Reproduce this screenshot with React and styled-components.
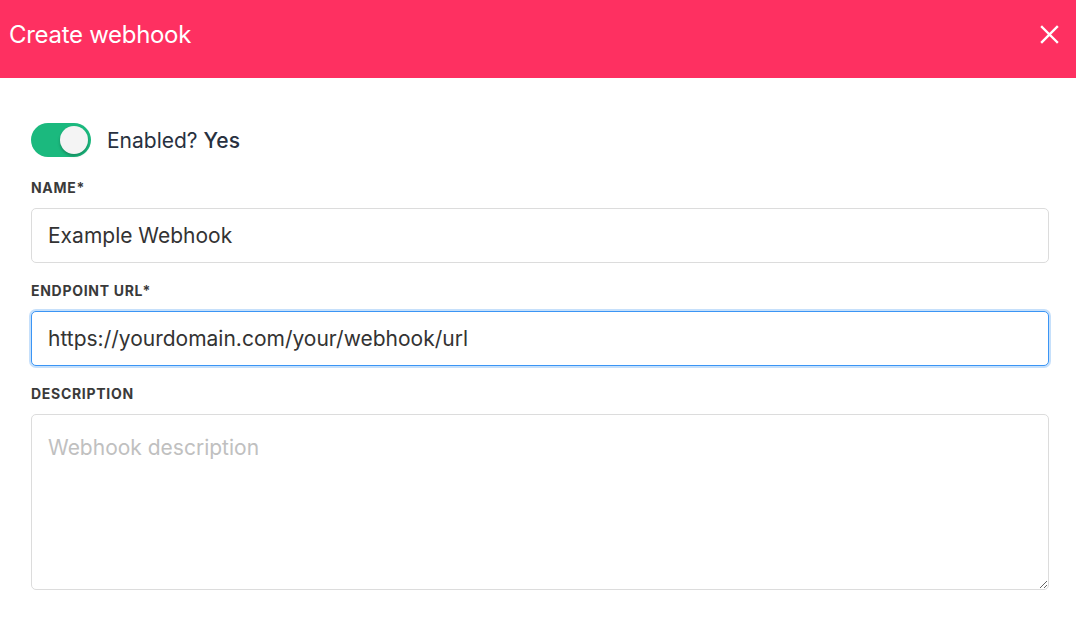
import React, { useEffect, useRef, useState } from "react";
import styled, { createGlobalStyle } from "styled-components";

const GlobalStyle = createGlobalStyle`
    *{ box-sizing: border-box; }
    body{
        margin: 0;
        background: #fff;
        font-family: Inter, "Liberation Sans", sans-serif;
    }
`;

export default function App(){
    const [enabled,setEnabled]=useState(true);
    const urlRef=useRef(null);

    useEffect(()=>{
        const el=urlRef.current;
        if(el){
            el.focus();
            el.setSelectionRange(el.value.length,el.value.length);
        }
    },[]);

    return (<Modal>
        <GlobalStyle/>
        <Header>
            <Title>Create webhook</Title>
            <Close aria-label="close">
                <svg width="19" height="19" viewBox="0 0 19 19">
                    <path d="M2 2L17 17M17 2L2 17" stroke="#fff" strokeWidth="2.4" strokeLinecap="square"/>
                </svg>
            </Close>
        </Header>
        <Body>
            <ToggleRow>
                <Toggle on={enabled} onClick={()=>setEnabled(!enabled)}><Knob on={enabled}/></Toggle>
                <ToggleText>Enabled? <b>{enabled ? "Yes" : "No"}</b></ToggleText>
            </ToggleRow>
            <Field first>
                <Label>Name*</Label>
                <Input defaultValue="Example Webhook"/>
            </Field>
            <Field>
                <Label>Endpoint URL*</Label>
                <Input ref={urlRef} defaultValue="https://yourdomain.com/your/webhook/url"/>
            </Field>
            <Field>
                <Label>Description</Label>
                <TextArea placeholder="Webhook description"/>
            </Field>
        </Body>
    </Modal>);
}

const Modal=styled.div`
    width: 1076px;
    height: 642px;
    background: #fff;
`
const Header=styled.div`
    height: 78px;
    background: #fe3061;
    display: flex;
    align-items: center;
    justify-content: space-between;
    padding: 0 17px 9px 9px;
`
const Title=styled.h1`
    margin: 0;
    font-weight: 400;
    font-size: 24px;
    color: #fff;
    letter-spacing: -0.3px;
`
const Close=styled.div`
    display: flex;
    align-items: center;
    cursor: pointer;
`
const Body=styled.div`
    padding: 45px 27px 0 31px;
    display: flex;
    flex-direction: column;
`
const ToggleRow=styled.div`
    display: flex;
    align-items: center;
    gap: 16px;
    height: 34px;
`
const Toggle=styled.div`
    width: 60px;
    height: 34px;
    border-radius: 17px;
    background: ${p=>p.on ? "#1bb97e" : "#ccc"};
    position: relative;
    cursor: pointer;
`
const Knob=styled.div`
    width: 28px;
    height: 28px;
    border-radius: 50%;
    background: #f4f4f4;
    box-shadow: 0 2px 3px rgba(0,0,0,0.25);
    position: absolute;
    top: 3px;
    left: ${p=>p.on ? "29px" : "3px"};
`
const ToggleText=styled.span`
    font-size: 21px;
    color: #283140;
    b{ font-weight: 500; }
`
const Field=styled.div`
    display: flex;
    flex-direction: column;
    margin-top: ${p=>p.first ? "23px" : "20px"};
`
const Label=styled.label`
    font-size: 14px;
    font-weight: 700;
    letter-spacing: 0.7px;
    text-transform: uppercase;
    color: #3a3a3a;
    line-height: 16px;
    margin-bottom: 12px;
`
const Input=styled.input`
    height: 55px;
    border: 1px solid #dcdcdc;
    border-radius: 5px;
    padding: 0 16px;
    font-family: Inter, "Liberation Sans", sans-serif;
    font-size: 21px;
    color: #333;
    caret-color: #222;
    outline: none;
    &:focus{
        border-color: #3b95f5;
        box-shadow: 0 0 0 2px #c6e0fb;
    }
`
const TextArea=styled.textarea`
    height: 176px;
    border: 1px solid #dcdcdc;
    border-radius: 5px;
    padding: 20px 16px;
    font-family: Inter, "Liberation Sans", sans-serif;
    font-size: 21px;
    color: #333;
    outline: none;
    resize: vertical;
    &::placeholder{ color: #c0c0c0; }
`
